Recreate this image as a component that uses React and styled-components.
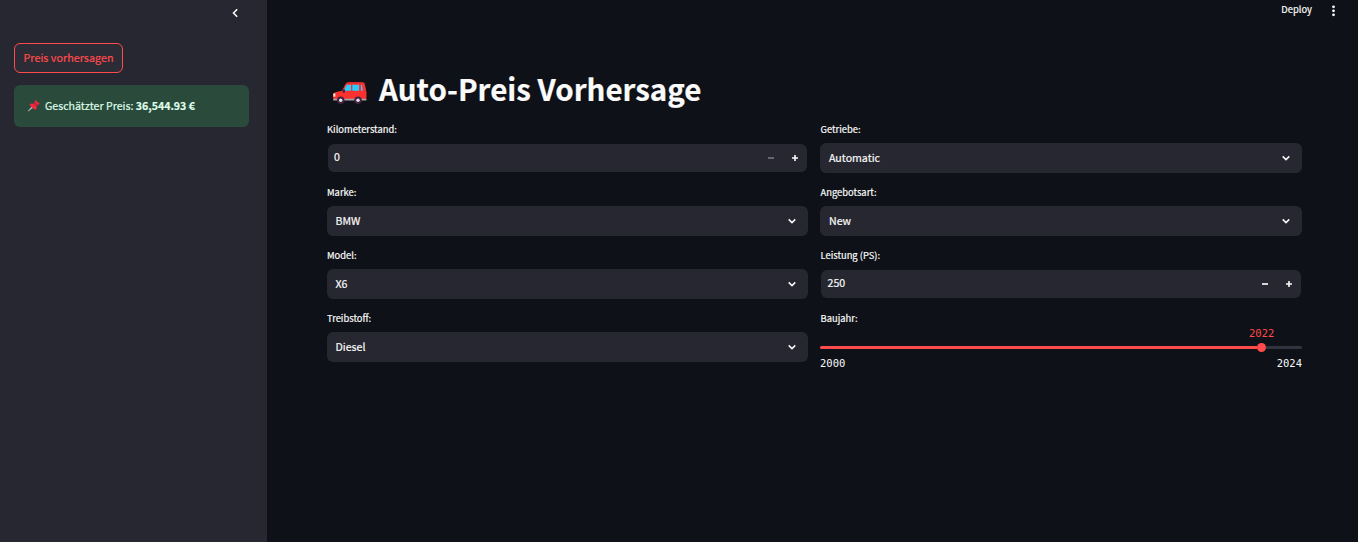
import React from "react";
import styled, { createGlobalStyle } from "styled-components";

const Global = createGlobalStyle`
  * { box-sizing: border-box; }
  body { margin: 0; background: #0e1117; }
`;

const Page = styled.div`
  display: flex;
  width: 1358px;
  height: 542px;
  overflow: hidden;
  background: #0e1117;
  color: #fafafa;
  font-family: "Noto Sans CJK SC", "Noto Sans", sans-serif;
  font-size: 10.6px;
  white-space: nowrap;
  -webkit-text-stroke: 0.2px currentColor;
`;

const Sidebar = styled.aside`
  flex: 0 0 267px;
  padding: 5px 18px 0 14px;
  background: #262730;
`;

const CollapseRow = styled.div`
  display: flex;
  justify-content: flex-end;
  height: 38px;
  padding-right: 6px;
`;

const PredictButton = styled.button`
  display: flex;
  align-items: center;
  justify-content: center;
  width: 109px;
  height: 30px;
  padding: 0 0 2px;
  border: 1px solid #ff4b4b;
  border-radius: 6px;
  background: #2b2c36;
  color: #ff4b4b;
  font: inherit;
  font-size: 10.8px;
`;

const Result = styled.div`
  display: flex;
  align-items: center;
  height: 42px;
  margin-top: 12px;
  padding: 0 13px;
  border-radius: 6px;
  background: #2a4a3b;
  color: #dffde9;
`;

const ResultText = styled.span`
  margin-left: 4px;
  padding-bottom: 2px;
  font-size: 10.6px;
`;

const Main = styled.main`
  flex: 1;
  display: flex;
  flex-direction: column;
`;

const Toolbar = styled.header`
  display: flex;
  justify-content: flex-end;
  align-items: center;
  gap: 12px;
  height: 20px;
  padding-right: 16px;
`;

const Deploy = styled.span`
  padding-bottom: 2px;
  font-size: 9.4px;
`;

const Content = styled.section`
  padding: 48px 56px 0 60px;
`;

const Title = styled.h1`
  display: flex;
  align-items: center;
  gap: 12px;
  height: 40px;
  margin: 0 0 14px;
  padding-left: 6px;
  font-size: 29.5px;
  font-weight: 700;
  line-height: 40px;
`;

const TitleIcon = styled.span`
  padding-top: 9px;
`;

const Columns = styled.div`
  display: grid;
  grid-template-columns: 481px 482px;
  column-gap: 12px;
`;

const Column = styled.div`
  display: flex;
  flex-direction: column;
`;

const Field = styled.div`
  height: 63px;
`;

const Label = styled.label`
  display: block;
  height: 21px;
  padding-left: ${(p) => (p.$inset ? 0.5 : 0)}px;
  font-size: 9.4px;
  line-height: 14px;
`;

const Box = styled.div`
  display: flex;
  align-items: center;
  justify-content: space-between;
  height: ${(p) => (p.$number ? 28 : 30)}px;
  margin: ${(p) => (p.$number ? "1px" : "0")};
  padding: ${(p) => (p.$number ? "0 6px" : "0 10px 0 8.5px")};
  border-radius: 6px;
  background: #262730;
`;

const Value = styled.span`
  padding-bottom: ${(p) => (p.$number ? 4 : 2)}px;
  padding-left: ${(p) => (p.$inset ? 0.5 : 0)}px;
`;

const Stepper = styled.div`
  display: flex;
  gap: 12px;
`;

const Slider = styled.div`
  display: flex;
  flex-direction: column;
  font-family: "DejaVu Sans Mono", monospace;
  font-size: 10.5px;
  line-height: 14px;
  -webkit-text-stroke: 0;
`;

const SliderValue = styled.div`
  width: 25px;
  height: 14px;
  margin: -6px 0 0 429px;
  color: #ff4b4b;
`;

const Track = styled.div`
  display: flex;
  align-items: center;
  height: 9px;
  margin-top: 3px;
`;

const Filled = styled.div`
  width: 437px;
  height: 3px;
  border-radius: 2px 0 0 2px;
  background: #ff4b4b;
`;

const Thumb = styled.div`
  width: 9px;
  height: 9px;
  border-radius: 50%;
  background: #ff4b4b;
`;

const Remaining = styled.div`
  flex: 1;
  height: 3px;
  border-radius: 0 2px 2px 0;
  background: #31333e;
`;

const Range = styled.div`
  display: flex;
  justify-content: space-between;
  margin-top: 4px;
`;

const Glyph = styled.svg`
  display: block;
  flex: none;
`;

const Chevron = () => (
  <Glyph width="12" height="12" viewBox="0 0 12 12">
    <path d="M2.7 4.4 6 7.6 9.3 4.4" fill="none" stroke="#fafafa" strokeWidth="1.5" />
  </Glyph>
);

const Minus = ({ muted }) => (
  <Glyph width="12" height="12" viewBox="0 0 12 12">
    <path d="M3 6h6" stroke={muted ? "#6c6d75" : "#e9e9eb"} strokeWidth="1.8" />
  </Glyph>
);

const Plus = () => (
  <Glyph width="12" height="12" viewBox="0 0 12 12">
    <path d="M3 6h6M6 3v6" stroke="#fafafa" strokeWidth="1.6" />
  </Glyph>
);

const Car = () => (
  <Glyph width="34" height="24" viewBox="0 0 34 24">
    <path d="M9 10 12.6 3Q13.5 1 16 1h13.5q2 0 2.4 2L33.3 11v5H8Z" fill="#d5282c" />
    <path d="M0 15q0-3 3-4l6-1.3L13 2.6h18.4L33.3 11v8H.5Z" fill="#fb312f" />
    <path d="M10.5 9.8 13.6 3.8H18v6ZM19.3 3.8H26v6h-6.7Z" fill="#2acbff" />
    <path d="M28 3.8h1l.8 6H28Z" fill="#2acbff" />
    <path d="M.3 17.8h33v1.7H.3Z" fill="#a4a3a8" />
    <ellipse cx="1.3" cy="14" rx="1.2" ry="1.9" fill="#ffd9c6" />
    <ellipse cx="10.8" cy="10" rx="1.3" ry="1.9" fill="#432449" />
    <circle cx="7.7" cy="19.3" r="3.8" fill="#402440" />
    <circle cx="25" cy="19.3" r="3.8" fill="#402440" />
    <circle cx="7.7" cy="19.3" r="1.7" fill="#eee4f2" />
    <circle cx="25" cy="19.3" r="1.7" fill="#eee4f2" />
  </Glyph>
);

const Pin = () => (
  <Glyph width="14" height="14" viewBox="0 0 14 14">
    <path d="m1 12.2 4-4.6 1 1Z" fill="#b6b7bb" stroke="#b6b7bb" strokeWidth=".6" />
    <path d="M2.3 5.8 4.4 4.6l2.1.4 1.3-2L8 .8l5 4.3-2.1.6-1.4 1.5.2 2.2L8 11.1Z" fill="#f5293b" />
    <path d="m6.5 5 1.4-1.8 2.8 2.7-1.3 1.4Z" fill="#c71b4b" />
  </Glyph>
);

const SelectField = ({ label, value, inset }) => (
  <Field>
    <Label $inset={inset}>{label}</Label>
    <Box><Value $inset={inset}>{value}</Value><Chevron /></Box>
  </Field>
);

const NumberField = ({ label, value, inset, atMinimum }) => (
  <Field>
    <Label $inset={inset}>{label}</Label>
    <Box $number>
      <Value $number $inset={inset}>{value}</Value>
      <Stepper><Minus muted={atMinimum} /><Plus /></Stepper>
    </Box>
  </Field>
);

export default function App() {
  return (
    <Page>
      <Global />
      <Sidebar>
        <CollapseRow>
          <Glyph width="16" height="16" viewBox="0 0 16 16">
            <path d="M10.2 4.2 6.5 8l3.7 3.8" fill="none" stroke="#fafafa" strokeWidth="1.6" />
          </Glyph>
        </CollapseRow>
        <PredictButton>Preis vorhersagen</PredictButton>
        <Result>
          <Pin />
          <ResultText>Geschätzter Preis: <b>36,544.93 €</b></ResultText>
        </Result>
      </Sidebar>
      <Main>
        <Toolbar>
          <Deploy>Deploy</Deploy>
          <Glyph width="18" height="18" viewBox="0 0 18 18" fill="#fafafa">
            <circle cx="9.5" cy="5.8" r="1.4" />
            <circle cx="9.5" cy="9.8" r="1.4" />
            <circle cx="9.5" cy="13.8" r="1.4" />
          </Glyph>
        </Toolbar>
        <Content>
          <Title><TitleIcon><Car /></TitleIcon><span>Auto-Preis Vorhersage</span></Title>
          <Columns>
            <Column>
              <NumberField label="Kilometerstand:" value="0" atMinimum />
              <SelectField label="Marke:" value="BMW" />
              <SelectField label="Model:" value="X6" />
              <SelectField label="Treibstoff:" value="Diesel" />
            </Column>
            <Column>
              <SelectField label="Getriebe:" value="Automatic" inset />
              <SelectField label="Angebotsart:" value="New" inset />
              <NumberField label="Leistung (PS):" value="250" inset />
              <Field>
                <Label $inset>Baujahr:</Label>
                <Slider>
                  <SliderValue>2022</SliderValue>
                  <Track><Filled /><Thumb /><Remaining /></Track>
                  <Range><span>2000</span><span>2024</span></Range>
                </Slider>
              </Field>
            </Column>
          </Columns>
        </Content>
      </Main>
    </Page>
  );
}
